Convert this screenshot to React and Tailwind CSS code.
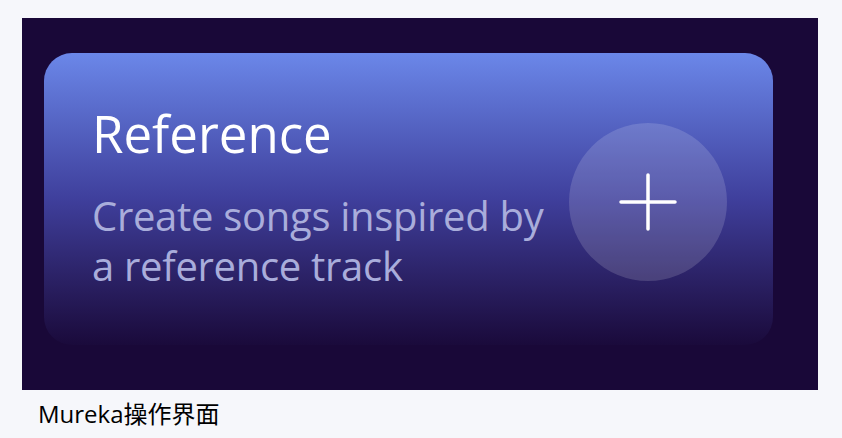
import React from 'react';

const App = () => {
    return (
        <div className="w-[842px] h-[438px] bg-[#f6f7fb] flex flex-col" style={{fontFamily: '"Open Sans", "Noto Sans CJK SC", sans-serif'}}>
            <div className="ml-[22px] mt-[18px] w-[796px] h-[372px] bg-[#190838] pt-[35px] pl-[22px]">
                <div className="w-[729px] h-[292px] rounded-[28px] bg-gradient-to-b from-[#6b87e9] via-[#3f3f9c] to-[#1a0a3b] flex items-start justify-between pl-[48px] pr-[46px]">
                    <div className="flex flex-col pt-[50px]">
                        <div className="text-[51px] leading-[60px] font-medium text-white">Reference</div>
                        <div className="mt-[28px] text-[40px] leading-[50px] text-[#a9addb] tracking-[-0.3px]">
                            Create songs inspired by
                            <br />
                            a reference track
                        </div>
                    </div>
                    <div className="mt-[70px] w-[158px] h-[158px] rounded-full bg-white/15 flex items-center justify-center">
                        <svg width="58" height="58" viewBox="0 0 58 58" fill="none" stroke="white" strokeWidth="3.5" strokeLinecap="round">
                            <path d="M29 2v54M2 29h54" />
                        </svg>
                    </div>
                </div>
            </div>
            <div className="ml-[38px] mt-[8px] text-[24px] leading-[32px] text-black">Mureka操作界面</div>
        </div>
    );
};

export default App;
